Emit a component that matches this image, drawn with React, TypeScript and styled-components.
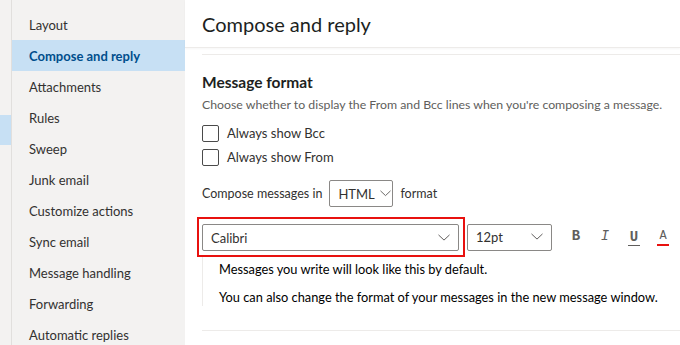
import styled, { createGlobalStyle } from 'styled-components';

const GlobalStyle = createGlobalStyle`
  html, body {
    margin: 0;
    padding: 0;
    background: #ffffff;
  }
  body {
    font-family: Lato, 'Noto Sans', Arial, sans-serif;
    color: #201f1e;
  }
`;

const navItems = [
  'Layout',
  'Compose and reply',
  'Attachments',
  'Rules',
  'Sweep',
  'Junk email',
  'Customize actions',
  'Sync email',
  'Message handling',
  'Forwarding',
  'Automatic replies',
];

const Chevron = ({ size = 12 }: { size?: number }) => (
  <ChevronSvg width={size} height={size * 0.6} viewBox="0 0 12 7" fill="none">
    <path d="M0.5 0.8 L6 6 L11.5 0.8" stroke="#605e5c" strokeWidth="1" />
  </ChevronSvg>
);

const App = () => {
  return (
    <>
      <GlobalStyle />
      <Page>
        <Rail>
          <RailMark />
        </Rail>
        <Sidebar>
          {navItems.map((item) => (
            <NavItem key={item} $active={item === 'Compose and reply'}>
              {item}
            </NavItem>
          ))}
        </Sidebar>
        <Main>
          <Header>
            <Title>Compose and reply</Title>
          </Header>
          <Content>
            <Divider />
            <SectionTitle>Message format</SectionTitle>
            <Description>
              Choose whether to display the From and Bcc lines when you're composing a message.
            </Description>
            <CheckRow>
              <Box />
              Always show Bcc
            </CheckRow>
            <CheckRow>
              <Box />
              Always show From
            </CheckRow>
            <FormatRow>
              Compose messages in
              <Select $width={64}>
                HTML
                <Chevron size={11} />
              </Select>
              format
            </FormatRow>
            <FontRow>
              <Highlight>
                <Select $width={257}>
                  Calibri
                  <Chevron />
                </Select>
              </Highlight>
              <Select $width={85}>
                12pt
                <Chevron />
              </Select>
              <Tools>
                <Tool>B</Tool>
                <Tool $italic>I</Tool>
                <Tool $underline>U</Tool>
                <Tool $color>A</Tool>
              </Tools>
            </FontRow>
            <Preview>
              <PreviewLine>Messages you write will look like this by default.</PreviewLine>
              <PreviewLine>
                You can also change the format of your messages in the new message window.
              </PreviewLine>
            </Preview>
            <Divider $bottom />
          </Content>
        </Main>
      </Page>
    </>
  );
};

const Page = styled.div`
  display: grid;
  grid-template-columns: 12px 173px 1fr;
  width: 680px;
  height: 345px;
  overflow: hidden;
`;

const Rail = styled.div`
  background: #f3f2f1;
  border-right: 1px solid #e1dfdd;
  padding-top: 115px;
`;

const RailMark = styled.div`
  height: 30px;
  background: #c7e0f4;
`;

const Sidebar = styled.nav`
  background: #f3f2f1;
  display: flex;
  flex-direction: column;
  padding-top: 9px;
`;

const NavItem = styled.div<{ $active?: boolean }>`
  height: 31px;
  display: flex;
  align-items: center;
  padding-left: 17px;
  font-size: 13px;
  color: ${(p) => (p.$active ? '#004e8c' : '#323130')};
  font-weight: ${(p) => (p.$active ? 700 : 400)};
  background: ${(p) => (p.$active ? '#c7e0f4' : 'transparent')};
`;

const Main = styled.main`
  display: flex;
  flex-direction: column;
  min-width: 0;
`;

const Header = styled.div`
  height: 47px;
  border-bottom: 1px solid #edebe9;
  box-shadow: 0 1px 2px rgba(0, 0, 0, 0.04);
  display: flex;
  align-items: center;
  padding-left: 17px;
`;

const Title = styled.h1`
  margin: 0;
  font-size: 20px;
  font-weight: 400;
  color: #201f1e;
`;

const Content = styled.div`
  padding-left: 17px;
  display: flex;
  flex-direction: column;
`;

const Divider = styled.div<{ $bottom?: boolean }>`
  height: 1px;
  background: #edebe9;
  margin-top: ${(p) => (p.$bottom ? '24px' : '6px')};
`;

const SectionTitle = styled.h2`
  margin: 16px 0 0;
  font-size: 15.5px;
  font-weight: 700;
  line-height: 22px;
`;

const Description = styled.p`
  margin: 3px 0 8px;
  font-size: 12.3px;
  line-height: 17px;
  color: #605e5c;
  white-space: nowrap;
`;

const CheckRow = styled.label`
  display: flex;
  align-items: center;
  gap: 8px;
  height: 24px;
  font-size: 13px;
  color: #323130;
`;

const Box = styled.span`
  width: 15px;
  height: 15px;
  border: 1px solid #4a4a4a;
  border-radius: 2px;
`;

const FormatRow = styled.div`
  display: flex;
  align-items: center;
  gap: 7px;
  margin-top: 11px;
  font-size: 12.5px;
  color: #323130;
`;

const ChevronSvg = styled.svg`
  flex-shrink: 0;
`;

const Select = styled.div<{ $width: number }>`
  width: ${(p) => p.$width}px;
  height: 27px;
  box-sizing: border-box;
  border: 1px solid #8a8886;
  border-radius: 2px;
  display: flex;
  align-items: center;
  justify-content: space-between;
  gap: 5px;
  padding: 0 8px;
  font-size: 13px;
  color: #323130;
  background: #fff;
`;

const FontRow = styled.div`
  display: flex;
  align-items: center;
  margin-top: 10px;
  margin-left: -5px;
  gap: 2px;
`;

const Highlight = styled.div`
  border: 2px solid #e8110f;
  padding: 5px 4px 4px 3px;
`;

const Tools = styled.div`
  display: flex;
  align-items: center;
  gap: 17px;
  margin-left: 16px;
`;

const Tool = styled.span<{ $italic?: boolean; $underline?: boolean; $color?: boolean }>`
  width: 12px;
  text-align: center;
  font-family: 'Liberation Mono', 'DejaVu Sans Mono', monospace;
  font-size: 14px;
  font-weight: ${(p) => (p.$italic ? 400 : 700)};
  font-style: ${(p) => (p.$italic ? 'italic' : 'normal')};
  color: #605e5c;
  line-height: 16px;
  border-bottom: ${(p) =>
    p.$color ? '2px solid #e8110f' : p.$underline ? '1px solid #605e5c' : '2px solid transparent'};
  ${(p) => (p.$color ? 'font-size: 12px; font-weight: 400;' : '')}
`;

const Preview = styled.div`
  border-left: 1px solid #edebe9;
  padding: 4px 0 0 16px;
  display: flex;
  flex-direction: column;
  gap: 11px;
`;

const PreviewLine = styled.div`
  font-family: Lato, 'Open Sans', sans-serif;
  font-size: 12.8px;
  color: #000;
  line-height: 17px;
  white-space: nowrap;
`;

export default App;
